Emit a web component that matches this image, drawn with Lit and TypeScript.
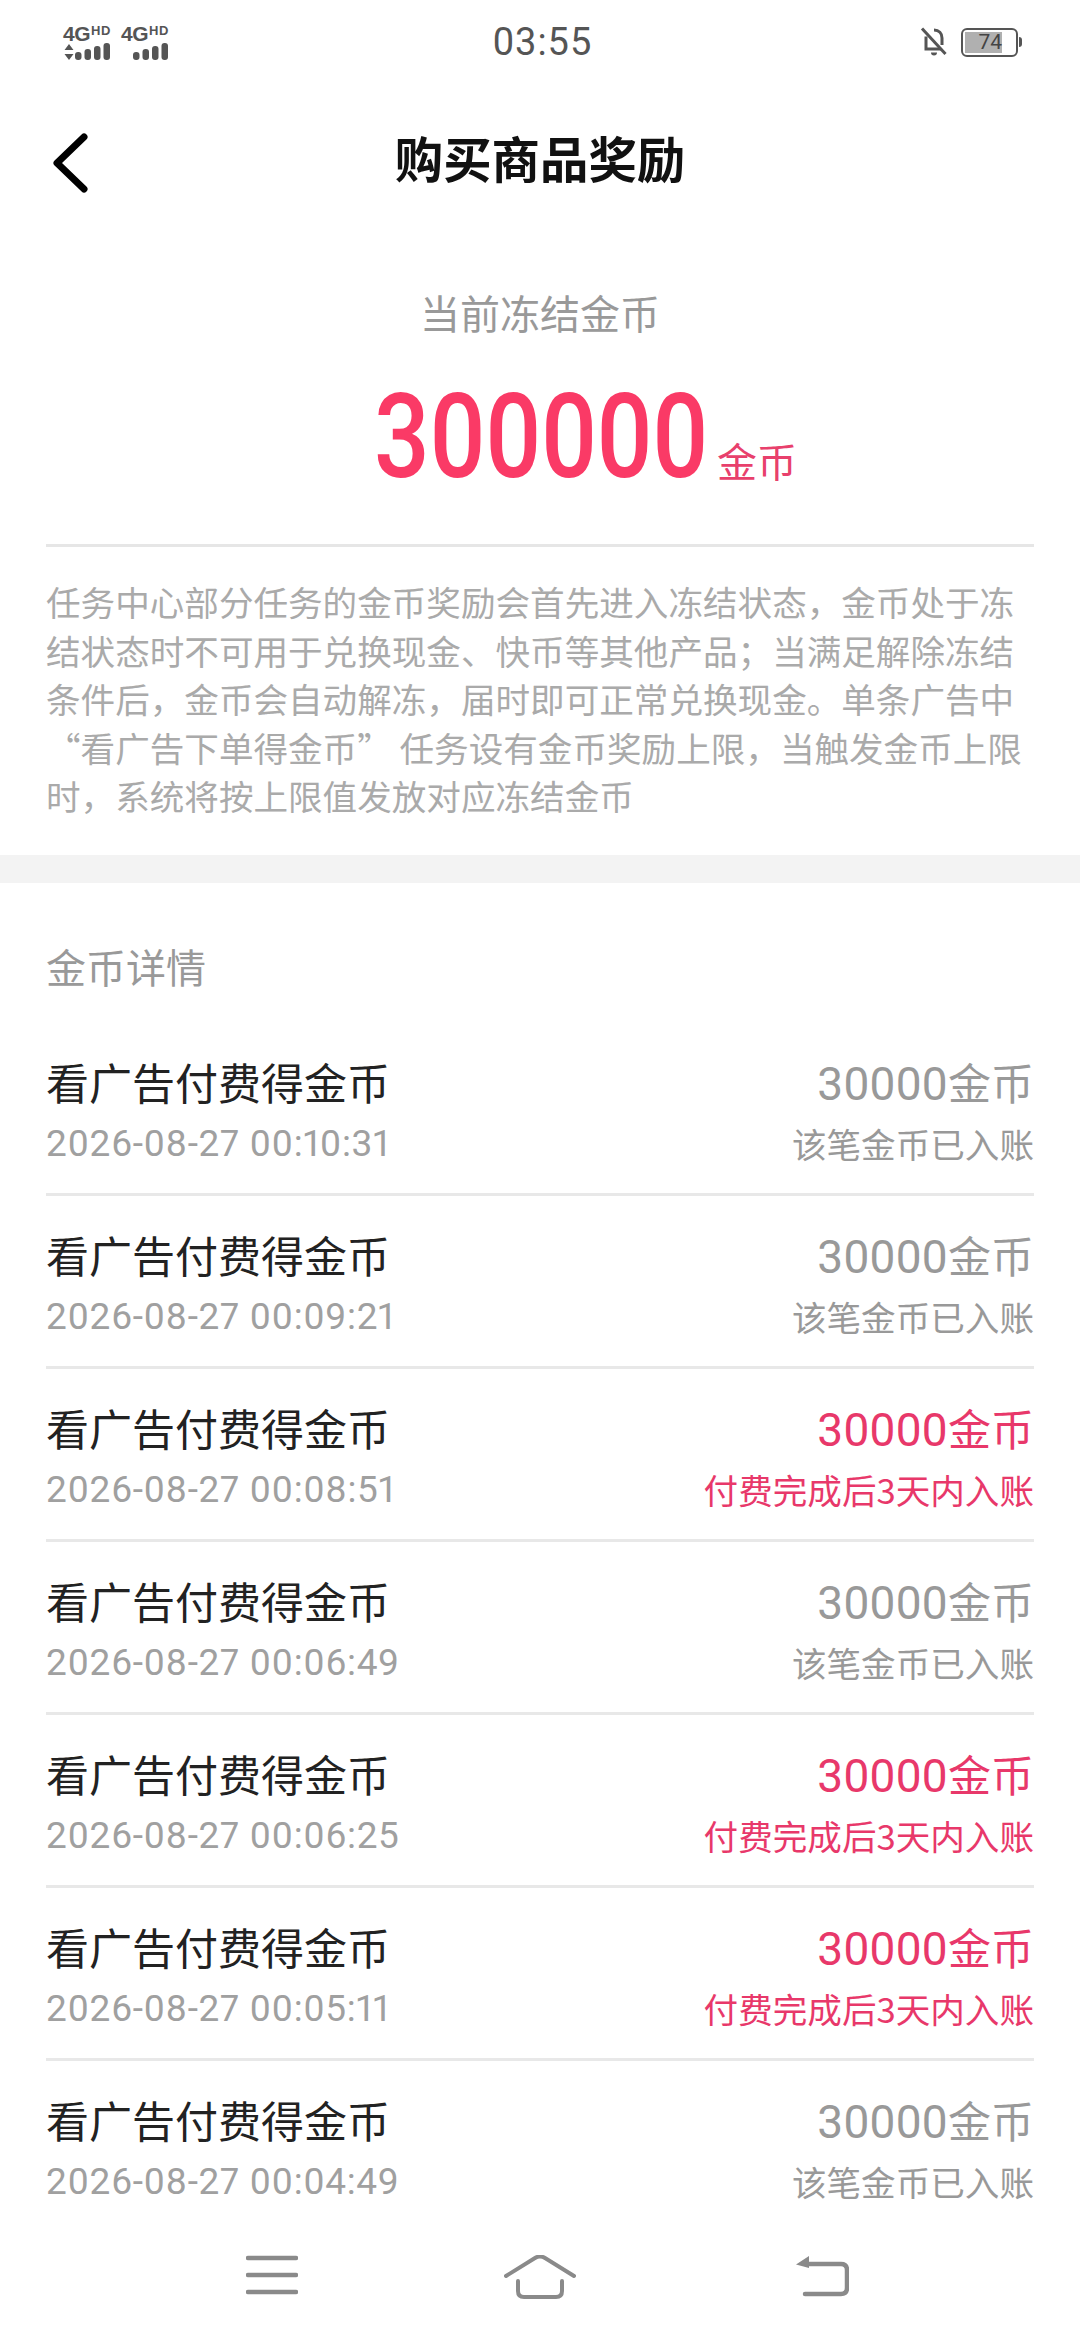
import { LitElement, html, css, svg } from "lit";
import { customElement } from "lit/decorators.js";
import { map } from "lit/directives/map.js";
import { classMap } from "lit/directives/class-map.js";

type Row = {
    time: string,
    pending: boolean
}

const rows: Row[] = [
    { time: "2026-08-27 00:10:31", pending: false },
    { time: "2026-08-27 00:09:21", pending: false },
    { time: "2026-08-27 00:08:51", pending: true },
    { time: "2026-08-27 00:06:49", pending: false },
    { time: "2026-08-27 00:06:25", pending: true },
    { time: "2026-08-27 00:05:11", pending: true },
    { time: "2026-08-27 00:04:49", pending: false },
]

const notice = [
    "任务中心部分任务的金币奖励会首先进入冻结状态，金币处于冻",
    "结状态时不可用于兑换现金、快币等其他产品；当满足解除冻结",
    "条件后，金币会自动解冻，届时即可正常兑换现金。单条广告中",
    "“看广告下单得金币” 任务设有金币奖励上限，当触发金币上限",
    "时，系统将按上限值发放对应冻结金币",
]

const signalBars = svg`
    <rect x="0" y="9" width="6.500" height="8" rx="3"/>
    <rect x="9.500" y="6" width="6.500" height="11" rx="3"/>
    <rect x="19" y="3" width="6.500" height="14" rx="3"/>
    <rect x="28.500" y="0" width="6.500" height="17" rx="3"/>
`

@customElement("app-root")
export class AppRoot extends LitElement {
    static styles = css`
    :host {
        display: block;
        width: 1080px;
        height: 2340px;
        background: #ffffff;
        font-family: "Noto Sans CJK SC", "Noto Sans", sans-serif;
        color: #222222;
    }

    .page {
        display: flex;
        flex-direction: column;
        height: 2340px;
        overflow: hidden;
    }

    .status {
        display: grid;
        grid-template-columns: 1fr auto 1fr;
        align-items: center;
        height: 84px;
        flex: none;
        padding: 0 58px 0 63px;
        color: #555555;
    }

    .sims {
        display: flex;
        gap: 11px;
    }

    .sim {
        display: flex;
        flex-direction: column;
        width: 47px;
    }

    .net {
        display: flex;
        height: 17px;
        font-family: "Liberation Sans", sans-serif;
        font-weight: 700;
        font-size: 21px;
        line-height: 17px;
        letter-spacing: -0.5px;
    }

    .net sup {
        font-size: 13px;
        line-height: 11px;
        letter-spacing: 0.5px;
        margin-left: 1px;
    }

    .bars {
        display: flex;
        justify-content: space-between;
        align-items: flex-end;
        height: 18px;
    }

    .bars svg {
        display: block;
        margin-left: auto;
    }

    .clock {
        font-family: Roboto, sans-serif;
        font-size: 38px;
        letter-spacing: 1px;
    }

    .sys {
        display: flex;
        justify-content: flex-end;
        align-items: center;
        gap: 13px;
    }

    .battery {
        display: flex;
        align-items: center;
        gap: 1px;
    }

    .cell {
        width: 57px;
        height: 29px;
        box-sizing: border-box;
        border: 2.5px solid #555555;
        border-radius: 6px;
        padding: 2px;
        display: flex;
    }

    .level {
        width: 37px;
        background: #b0b0b0;
        font-family: Roboto, sans-serif;
        font-size: 21px;
        line-height: 21px;
        text-align: right;
        white-space: nowrap;
        color: #444444;
    }

    .nib {
        width: 3px;
        height: 10px;
        background: #555555;
        border-radius: 0 3px 3px 0;
    }

    .nav {
        position: relative;
        box-sizing: border-box;
        height: 154px;
        padding-bottom: 8px;
        flex: none;
        display: flex;
        align-items: center;
        justify-content: center;
        font-size: 48.4px;
        font-weight: 700;
        color: #111111;
    }

    .back {
        position: absolute;
        left: 50px;
        top: 47px;
    }

    .summary {
        flex: none;
        padding: 45px 46px 0;
        display: flex;
        flex-direction: column;
        align-items: center;
    }

    .summary .label {
        font-size: 40px;
        line-height: 58px;
        color: #999999;
    }

    .amount {
        display: grid;
        grid-template-columns: 1fr auto 1fr;
        align-items: baseline;
        width: 100%;
        height: 140px;
        margin-top: 32px;
        color: #fa3a66;
    }

    .amount b {
        grid-column: 2;
        display: inline-block;
        width: 332px;
        font-family: Roboto, sans-serif;
        font-weight: 500;
        font-size: 116px;
        line-height: 128px;
        transform: scaleX(0.845);
        transform-origin: left center;
        white-space: nowrap;
    }

    .amount span {
        margin-left: 11px;
        font-size: 40px;
        color: #e8406c;
    }

    .rule {
        height: 3px;
        width: 988px;
        background: #e6e6e6;
        margin-top: 31px;
    }

    .notice {
        flex: none;
        padding: 30px 46px 35px;
        font-size: 34.6px;
        line-height: 48.5px;
        color: #aaaaaa;
        white-space: nowrap;
    }

    .band {
        flex: none;
        height: 28px;
        background: #f3f3f3;
    }

    .list {
        flex: 1;
        min-height: 0;
        overflow: hidden;
        padding: 55px 46px 0;
    }

    .heading {
        font-size: 40px;
        line-height: 56px;
        color: #999999;
        margin-bottom: 29px;
    }

    .row {
        box-sizing: border-box;
        height: 173px;
        padding-top: 28px;
        border-bottom: 3px solid #e8e8e8;
        display: flex;
        justify-content: space-between;
    }

    .row:last-child {
        border-bottom: none;
    }

    .col {
        display: flex;
        flex-direction: column;
        gap: 2px;
    }

    .col.right {
        align-items: flex-end;
        color: #999999;
    }

    .col.right.pending {
        color: #e8386a;
    }

    .title {
        font-size: 43px;
        line-height: 60px;
    }

    .time {
        font-family: Roboto, sans-serif;
        font-size: 37px;
        line-height: 56px;
        letter-spacing: 0.6px;
        font-variant-numeric: proportional-nums;
        margin-top: 3px;
        color: #a0a0a0;
    }

    .coins {
        font-size: 43px;
        line-height: 60px;
    }

    .coins em {
        font-family: Roboto, sans-serif;
        font-style: normal;
        font-size: 46px;
        letter-spacing: 0.3px;
    }

    .state {
        font-size: 34.6px;
        line-height: 56px;
        margin-top: -1px;
    }

    .softkeys {
        flex: none;
        box-sizing: border-box;
        height: 120px;
        background: #ffffff;
        display: flex;
        align-items: flex-start;
        padding: 35px 0 0 246px;
    }

    .softkeys .home {
        margin-left: 206px;
    }

    .softkeys .ret {
        margin-left: 219px;
    }
    `

    renderRow(row: Row) {
        const state = { right: true, col: true, pending: row.pending }
        return html`
        <div class="row">
            <div class="col">
                <div class="title">看广告付费得金币</div>
                <div class="time">${row.time}</div>
            </div>
            <div class=${classMap(state)}>
                <div class="coins"><em>30000</em>金币</div>
                <div class="state">${row.pending ? "付费完成后3天内入账" : "该笔金币已入账"}</div>
            </div>
        </div>
        `
    }

    render() {
        return html`
        <div class="page">
            <div class="status">
                <div class="sims">
                    <div class="sim">
                        <div class="net">4G<sup>HD</sup></div>
                        <div class="bars">
                            <svg width="10" height="16" viewBox="0 0 10 16" fill="#555555">
                                <path d="M5 0l4.500 6h-9zM5 16l-4.500-6h9z"/>
                            </svg>
                            <svg width="35" height="17" viewBox="0 0 35 17" fill="#555555">${signalBars}</svg>
                        </div>
                    </div>
                    <div class="sim">
                        <div class="net">4G<sup>HD</sup></div>
                        <div class="bars">
                            <svg width="35" height="17" viewBox="0 0 35 17" fill="#555555">${signalBars}</svg>
                        </div>
                    </div>
                </div>
                <div class="clock">03:55</div>
                <div class="sys">
                    <svg width="28" height="30" viewBox="0 0 28 30" fill="none" stroke="#555555" stroke-width="3">
                        <path d="M14 3c5 0 8 3.500 8 8v7M6 9.500V22H21"/>
                        <path d="M2 1.500L25.500 27"/>
                        <path d="M11 25.500a3 3 0 0 0 6 0" fill="#555555" stroke="none"/>
                    </svg>
                    <div class="battery">
                        <div class="cell"><div class="level">74</div></div>
                        <div class="nib"></div>
                    </div>
                </div>
            </div>

            <div class="nav">
                <svg class="back" width="42" height="64" viewBox="0 0 42 64" fill="none" stroke="#000000" stroke-width="7" stroke-linecap="round" stroke-linejoin="round">
                    <path d="M34 6L7 32L34 58"/>
                </svg>
                购买商品奖励
            </div>

            <div class="summary">
                <div class="label">当前冻结金币</div>
                <div class="amount"><b>300000</b><span>金币</span></div>
                <div class="rule"></div>
            </div>

            <div class="notice">
                ${map(notice, (line) => html`<div>${line}</div>`)}
            </div>

            <div class="band"></div>

            <div class="list">
                <div class="heading">金币详情</div>
                ${map(rows, (row) => this.renderRow(row))}
            </div>

            <div class="softkeys">
                <svg width="52" height="40" viewBox="0 0 52 40" fill="none" stroke="#8a8a8a" stroke-width="4.500" stroke-linecap="round">
                    <path d="M2 3H50M2 20H50M2 37H50"/>
                </svg>
                <svg class="home" width="72" height="44" viewBox="0 0 72 44" fill="none" stroke="#8a8a8a" stroke-width="4" stroke-linecap="round" stroke-linejoin="round">
                    <path d="M2 21L31 3Q36 0 41 3L70 21"/>
                    <path d="M14 26V36Q14 42 20 42H52Q58 42 58 36V26"/>
                </svg>
                <svg class="ret" width="54" height="42" viewBox="0 0 54 42" fill="none" stroke="#8a8a8a" stroke-width="4.500" stroke-linecap="round" stroke-linejoin="round">
                    <path d="M12 9H46Q52 9 52 15V33Q52 39 46 39H10"/>
                    <path d="M14 1L1 9.500L14 13Z" fill="#8a8a8a" stroke="none"/>
                </svg>
            </div>
        </div>
        `
    }
}
